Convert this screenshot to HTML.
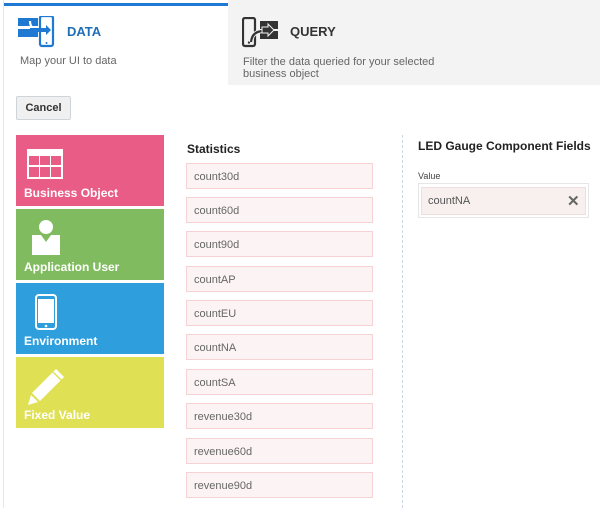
<!DOCTYPE html>
<html><head><meta charset="utf-8"><style>
*{margin:0;padding:0;box-sizing:border-box}
body{width:600px;height:508px;overflow:hidden;background:#fff;font-family:"Liberation Sans",sans-serif;position:relative}
.a{position:absolute}
.item{position:absolute;left:186px;width:187px;height:26px;background:#fcf4f4;border:1px solid #f6d2d5;font-size:11px;color:#666;padding:7px 0 0 7px}
.tile{position:absolute;left:16px;width:148px;height:71px;color:#fff;font-weight:bold;font-size:12px}
.tile span{position:absolute;left:8px;bottom:6px}
</style></head><body>
<div class="a" style="left:0;top:0;width:4px;height:508px;background:#fff;border-right:1px solid #e8e8e8"></div>
<div class="a" style="left:4px;top:3px;width:224px;height:3px;background:#1f78d1"></div>
<div class="a" style="left:228px;top:0;width:372px;height:85px;background:#f3f3f3"></div>
<svg class="a" style="left:18px;top:16px" width="38" height="32" viewBox="0 0 38 32">
<rect x="0" y="2" width="20" height="8" fill="#1f78d1"/><rect x="0" y="13" width="20" height="8" fill="#1f78d1"/>
<rect x="22" y="0" width="13" height="30" rx="2" fill="none" stroke="#1f78d1" stroke-width="2.2"/>
<circle cx="28.5" cy="27" r="1" fill="#1f78d1"/>
<path d="M12 5 Q12 14 22 14" fill="none" stroke="#fff" stroke-width="2.2"/>
<path d="M12 12 L28 12 L28 9 L33 14 L28 19 L28 16 L12 16Z" fill="#1f78d1"/>
</svg>
<div class="a" style="left:67px;top:24px;font-size:13px;font-weight:bold;color:#1f6eb8">DATA</div>
<div class="a" style="left:20px;top:55px;font-size:11px;color:#666">Map your UI to data</div>
<svg class="a" style="left:242px;top:17px" width="38" height="31" viewBox="0 0 38 31">
<rect x="1" y="1" width="12" height="28" rx="2" fill="none" stroke="#333" stroke-width="2.2"/>
<circle cx="7" cy="25.5" r="1.2" fill="#333"/>
<rect x="18" y="4" width="18" height="8" fill="#333"/><rect x="18" y="14" width="18" height="8" fill="#333"/>
<path d="M9 25 Q10 14 22 14" fill="none" stroke="#f3f3f3" stroke-width="4"/>
<path d="M9 25 Q10 14 22 14" fill="none" stroke="#333" stroke-width="2.2"/>
<path d="M20 10 L26 10 L26 7 L32 13 L26 19 L26 16 L20 16Z" fill="#333" stroke="#f3f3f3" stroke-width="1"/>
</svg>
<div class="a" style="left:290px;top:24px;font-size:13px;font-weight:bold;color:#333">QUERY</div>
<div class="a" style="left:243px;top:56px;font-size:11px;color:#666;line-height:12px">Filter the data queried for your selected<br>business object</div>
<div class="a" style="left:16px;top:96px;width:55px;height:24px;background:#f0f0f0;border:1px solid #cfd4d8;border-radius:2px;font-size:11px;font-weight:bold;color:#333;text-align:center;line-height:22px">Cancel</div>

<div class="tile" style="top:135px;background:#e85c86"><svg class="a" style="left:11px;top:14px" width="36" height="30"><rect x="0" y="0" width="36" height="30" fill="#fff"/><g fill="#e85c86"><rect x="2" y="7" width="10" height="9"/><rect x="13" y="7" width="10" height="9"/><rect x="24" y="7" width="10" height="9"/><rect x="2" y="18" width="10" height="10"/><rect x="13" y="18" width="10" height="10"/><rect x="24" y="18" width="10" height="10"/></g></svg><span>Business Object</span></div>
<div class="tile" style="top:209px;background:#80bc5f"><svg class="a" style="left:16px;top:11px" width="28" height="35"><circle cx="14" cy="7" r="7" fill="#fff"/><path d="M0 15 L9 15 L14 22 L19 15 L28 15 L28 35 L0 35Z" fill="#fff"/></svg><span>Application User</span></div>
<div class="tile" style="top:283px;background:#2e9fdc"><svg class="a" style="left:19px;top:11px" width="22" height="36"><rect x="1" y="1" width="20" height="34" rx="3" fill="none" stroke="#fff" stroke-width="2"/><rect x="3" y="5" width="16" height="24" fill="#fff"/><circle cx="11" cy="32" r="1.3" fill="#fff"/></svg><span>Environment</span></div>
<div class="tile" style="top:357px;background:#dfe053"><svg class="a" style="left:10px;top:10px" width="40" height="40"><path d="M30 2 L38 10 L14 34 L6 26Z" fill="#fff"/><path d="M5 28 L12 35 L2 38Z" fill="#fff"/><path d="M27 5 L35 13" stroke="#dfe053" stroke-width="1.5"/></svg><span>Fixed Value</span></div>

<div class="a" style="left:187px;top:142px;font-size:12px;font-weight:bold;color:#222">Statistics</div>
<div class="item" style="top:163px">count30d</div>
<div class="item" style="top:197px">count60d</div>
<div class="item" style="top:231px">count90d</div>
<div class="item" style="top:266px">countAP</div>
<div class="item" style="top:300px">countEU</div>
<div class="item" style="top:334px">countNA</div>
<div class="item" style="top:369px">countSA</div>
<div class="item" style="top:403px">revenue30d</div>
<div class="item" style="top:438px">revenue60d</div>
<div class="item" style="top:472px">revenue90d</div>

<div class="a" style="left:402px;top:135px;height:373px;border-left:1px dashed #cdd6e0"></div>
<div class="a" style="left:418px;top:139px;font-size:12px;font-weight:bold;color:#222">LED Gauge Component Fields</div>
<div class="a" style="left:418px;top:171px;font-size:9px;color:#444">Value</div>
<div class="a" style="left:418px;top:183px;width:171px;height:35px;border:1px solid #e6e6e6;background:#fff"></div>
<div class="a" style="left:421px;top:187px;width:165px;height:28px;background:#f8efef;border:1px solid #eedede;font-size:11px;color:#555;padding:7px 0 0 6px">countNA</div>
<div class="a" style="left:567px;top:192px;font-size:15px;font-weight:bold;color:#666">✕</div>
</body></html>
